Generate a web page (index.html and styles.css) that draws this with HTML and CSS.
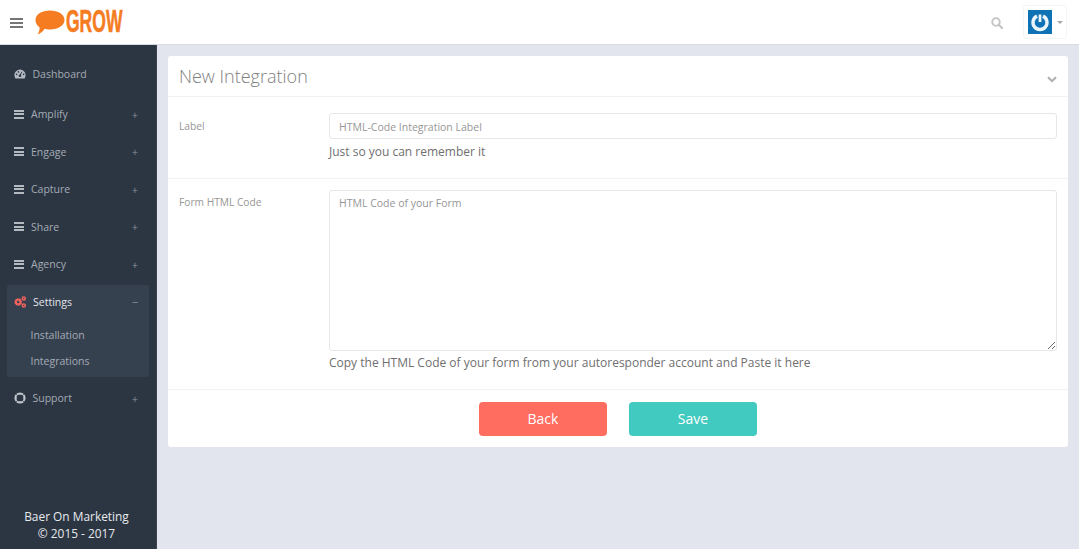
FILE: index.html
```html
<!DOCTYPE html>
<html lang="en">
<head>
<meta charset="utf-8">
<title>New Integration</title>
<link rel="stylesheet" href="styles.css">
</head>
<body>
<header class="topbar">
  <span class="burger"><i></i><i></i><i></i></span>
  <div class="logo">
    <svg class="bubble" width="30" height="25" viewBox="0 0 30 25"><path d="M15 0.500C23 0.500 29.500 4.300 29.500 10C29.500 15.500 23 19.500 15 19.500C13 19.500 11 19.300 9.500 18.800C8 21.500 5.500 23.500 2.500 24.500C4 22.500 4.800 20 4.500 17.300C1.800 15.500 0.500 13 0.500 10C0.500 4.300 7 0.500 15 0.500Z" fill="#f57c21"/></svg>
    <span class="logo-text">GROW</span>
  </div>
  <div class="top-right">
    <svg class="search" width="12" height="12" viewBox="0 0 12 12"><circle cx="5" cy="5" r="3.800" fill="none" stroke="#c4c4c4" stroke-width="1.800"/><path d="M7.800 7.800L11 11" stroke="#c4c4c4" stroke-width="2.200" stroke-linecap="round"/></svg>
    <div class="user">
      <span class="avatar"><svg width="24" height="24" viewBox="0 0 24 24"><path d="M9 6.160A7 7 0 1 0 15 6.160" fill="none" stroke="#eaf4fa" stroke-width="3.400"/><path d="M12 4.500V12" stroke="#eaf4fa" stroke-width="2.800"/></svg></span>
      <span class="caret"></span>
    </div>
  </div>
</header>
<div class="body">
  <aside class="sidebar">
    <nav class="nav">
      <a class="item first"><svg class="ico" width="12" height="10" viewBox="0 0 12 10"><path d="M6 0.500A5.600 5.600 0 0 0 0.400 6.100C0.400 7.300 0.800 8.500 1.400 9.500H10.600C11.200 8.500 11.600 7.300 11.600 6.100A5.600 5.600 0 0 0 6 0.500Z" fill="#b4bac2"/><circle cx="6" cy="6.800" r="1.300" fill="#2c3643"/><path d="M6 6.500L7.800 2.800" stroke="#2c3643" stroke-width="1"/><circle cx="2.600" cy="5.400" r=".8" fill="#2c3643"/><circle cx="9.600" cy="5.400" r=".8" fill="#2c3643"/><circle cx="4.400" cy="2.900" r=".8" fill="#2c3643"/></svg><span class="label tight">Dashboard</span></a>
      <a class="item"><span class="bars"><i></i><i></i><i></i></span><span class="label">Amplify</span><span class="sign">+</span></a>
      <a class="item"><span class="bars"><i></i><i></i><i></i></span><span class="label">Engage</span><span class="sign">+</span></a>
      <a class="item"><span class="bars"><i></i><i></i><i></i></span><span class="label">Capture</span><span class="sign">+</span></a>
      <a class="item"><span class="bars"><i></i><i></i><i></i></span><span class="label">Share</span><span class="sign">+</span></a>
      <a class="item"><span class="bars"><i></i><i></i><i></i></span><span class="label">Agency</span><span class="sign">+</span></a>
      <div class="group">
        <a class="item active"><svg class="ico" width="12" height="12" viewBox="0 0 12 12"><circle cx="4.200" cy="6" r="2.500" fill="none" stroke="#f0625c" stroke-width="2.600"/><circle cx="4.200" cy="6" r="3.900" fill="none" stroke="#364150" stroke-width="1" stroke-dasharray="1 2.060"/><circle cx="9.800" cy="2.600" r="1.500" fill="none" stroke="#f0625c" stroke-width="1.500"/><circle cx="9.800" cy="9.400" r="1.500" fill="none" stroke="#f0625c" stroke-width="1.500"/></svg><span class="label">Settings</span><span class="sign">&minus;</span></a>
        <a class="sub first-sub">Installation</a>
        <a class="sub">Integrations</a>
      </div>
      <a class="item support"><svg class="ico" width="12" height="12" viewBox="0 0 12 12"><circle cx="6" cy="6" r="4.600" fill="none" stroke="#c0c5cc" stroke-width="2"/><path d="M2 5L2 7M10 5L10 7M5 2L7 2M5 10L7 10" stroke="#c0c5cc" stroke-width="1"/><path d="M1.800 1.800L3.600 3.600M10.200 1.800L8.400 3.600M1.800 10.200L3.600 8.400M10.200 10.200L8.400 8.400" stroke="#2c3643" stroke-width=".7"/></svg><span class="label tight">Support</span><span class="sign">+</span></a>
    </nav>
    <footer class="copy">Baer On Marketing<br>&copy; 2015 - 2017</footer>
  </aside>
  <main class="main">
    <section class="card">
      <div class="card-head">
        <h1>New Integration</h1>
        <svg class="chev" width="10" height="7" viewBox="0 0 10 7"><path d="M1 1.200L5 5.200L9 1.200" fill="none" stroke="#adadad" stroke-width="2"/></svg>
      </div>
      <div class="row row-label">
        <label class="field-label">Label</label>
        <div class="field">
          <input class="input" type="text" placeholder="HTML-Code Integration Label">
          <p class="help">Just so you can remember it</p>
        </div>
      </div>
      <div class="row row-code">
        <label class="field-label">Form HTML Code</label>
        <div class="field">
          <textarea class="textarea" placeholder="HTML Code of your Form"></textarea>
          <p class="help">Copy the HTML Code of your form from your autoresponder account and Paste it here</p>
        </div>
      </div>
      <div class="actions">
        <button class="btn back">Back</button>
        <button class="btn save">Save</button>
      </div>
    </section>
  </main>
</div>
</body>
</html>
```
FILE: styles.css
```css
* { box-sizing: border-box; }
html, body { margin: 0; height: 100%; }
body {
  font-family: "Open Sans", sans-serif;
  background: #e2e5ee;
  overflow: hidden;
  display: flex;
  flex-direction: column;
  height: 549px;
}
.topbar {
  height: 45px;
  flex: none;
  background: #fff;
  border-bottom: 1px solid #d9dce4;
  display: flex;
  align-items: center;
  padding: 0 12px 0 10px;
}
.burger { display: flex; flex-direction: column; gap: 2px; width: 13px; margin-top: 1px; }
.burger i { display: block; height: 2px; background: #757575; }
.logo { display: flex; align-items: center; margin-left: 12px; }
.bubble { display: block; margin-top: 1px; }
.logo-text {
  display: block;
  width: 58px;
  margin-left: 1px;
  font-family: "Liberation Sans", sans-serif;
  font-weight: 700;
  font-size: 31px;
  line-height: 30px;
  color: #f57c21;
  -webkit-text-stroke: 0.6px #f57c21;
  transform: scaleX(.565);
  transform-origin: left center;
  white-space: nowrap;
}
.top-right { margin-left: auto; display: flex; align-items: center; }
.search { display: block; margin-right: 20px; margin-top: 1px; }
.user {
  width: 44px;
  height: 34px;
  border: 1px solid #f3f4f7;
  border-radius: 3px;
  display: flex;
  align-items: center;
  padding-left: 4px;
}
.avatar {
  width: 24px;
  height: 24px;
  background: #0f72b5;
  display: block;
}
.avatar svg { display: block; }
.caret {
  margin-left: 5px;
  border: 3px solid transparent;
  border-top-color: #a8a8a8;
  border-bottom-width: 0;
}
.body { flex: 1; display: flex; min-height: 0; }
.sidebar {
  width: 157px;
  flex: none;
  background: #2c3643;
  border-right: 1px solid #3c4653;
  display: flex;
  flex-direction: column;
  padding-top: 10px;
}
.nav { flex: 1; display: flex; flex-direction: column; padding: 0 7px; }
.item {
  height: 37.500px;
  flex: none;
  display: flex;
  align-items: center;
  padding: 0 11px 0 7px;
  font-size: 10.500px;
  color: #a4abb4;
}
.item.first { height: 37px; margin-bottom: 3.500px; }
.ico { display: block; flex: none; }
.bars { width: 10px; display: flex; flex-direction: column; gap: 1.500px; flex: none; }
.bars i { display: block; height: 2px; background: #b4bac2; }
.label { margin-left: 7px; }
.label.tight { margin-left: 6.500px; }
.sign { margin-left: auto; font-size: 11px; color: #8a929c; }
.group {
  height: 92px;
  background: #364150;
  border-radius: 3px;
  margin-top: 1.500px;
  display: flex;
  flex-direction: column;
}
.item.active { height: 34px; color: #e3e6ea; }
.sub {
  height: 26px;
  flex: none;
  display: flex;
  align-items: center;
  padding-left: 23.500px;
  font-size: 10.500px;
  color: #a4abb4;
}
.first-sub { margin-top: 3px; }
.support { margin-top: 3px; }
.copy {
  text-align: center;
  font-size: 11.900px;
  line-height: 16.500px;
  color: #e8eaed;
  padding: 0 3px 8px 0;
}
.main { flex: 1; padding: 11px 11px 0; min-width: 0; }
.card { background: #fff; border-radius: 3px; height: 391px; display: flex; flex-direction: column; }
.card-head {
  height: 41px;
  flex: none;
  border-bottom: 1px solid #f1f2f6;
  display: flex;
  align-items: center;
  padding: 0 11px;
}
.card-head h1 { margin: 0; font-size: 18px; font-weight: 300; color: #808080; }
.chev { margin-left: auto; display: block; margin-top: 6px; }
.row { display: flex; padding-right: 11px; border-bottom: 1px solid #f1f2f6; flex: none; }
.row-label { height: 82px; padding-top: 16px; }
.row-code { height: 211px; padding-top: 11px; }
.field-label { width: 161px; flex: none; padding-left: 11px; font-size: 10.200px; color: #969696; line-height: 14px; padding-top: 5px; }
.row-label .field-label { padding-top: 6px; }
.field { flex: 1; min-width: 0; }
.input, .textarea {
  display: block;
  width: 100%;
  border: 1px solid #e4e6ea;
  border-radius: 3px;
  font-family: "Open Sans", sans-serif;
  font-size: 10.500px;
  color: #555;
  background: #fff;
  outline: none;
}
.input { height: 26px; padding: 1px 9px 0; }
.textarea { height: 161px; padding: 5px 9px; }
.input::placeholder, .textarea::placeholder { color: #969696; opacity: 1; }
.help { margin: 4px 0 0; font-size: 12px; line-height: 17px; color: #6f6f6f; }
.row-code .help { margin-top: 3px; }
.actions { flex: 1; display: flex; justify-content: center; gap: 22px; padding-top: 11.500px; }
.btn {
  width: 128px;
  height: 34.500px;
  border: 0;
  border-radius: 4px;
  color: #fff;
  font-family: "Open Sans", sans-serif;
  font-size: 14px;
}
.back { background: #ff6c60; }
.save { background: #41cac0; }
```
